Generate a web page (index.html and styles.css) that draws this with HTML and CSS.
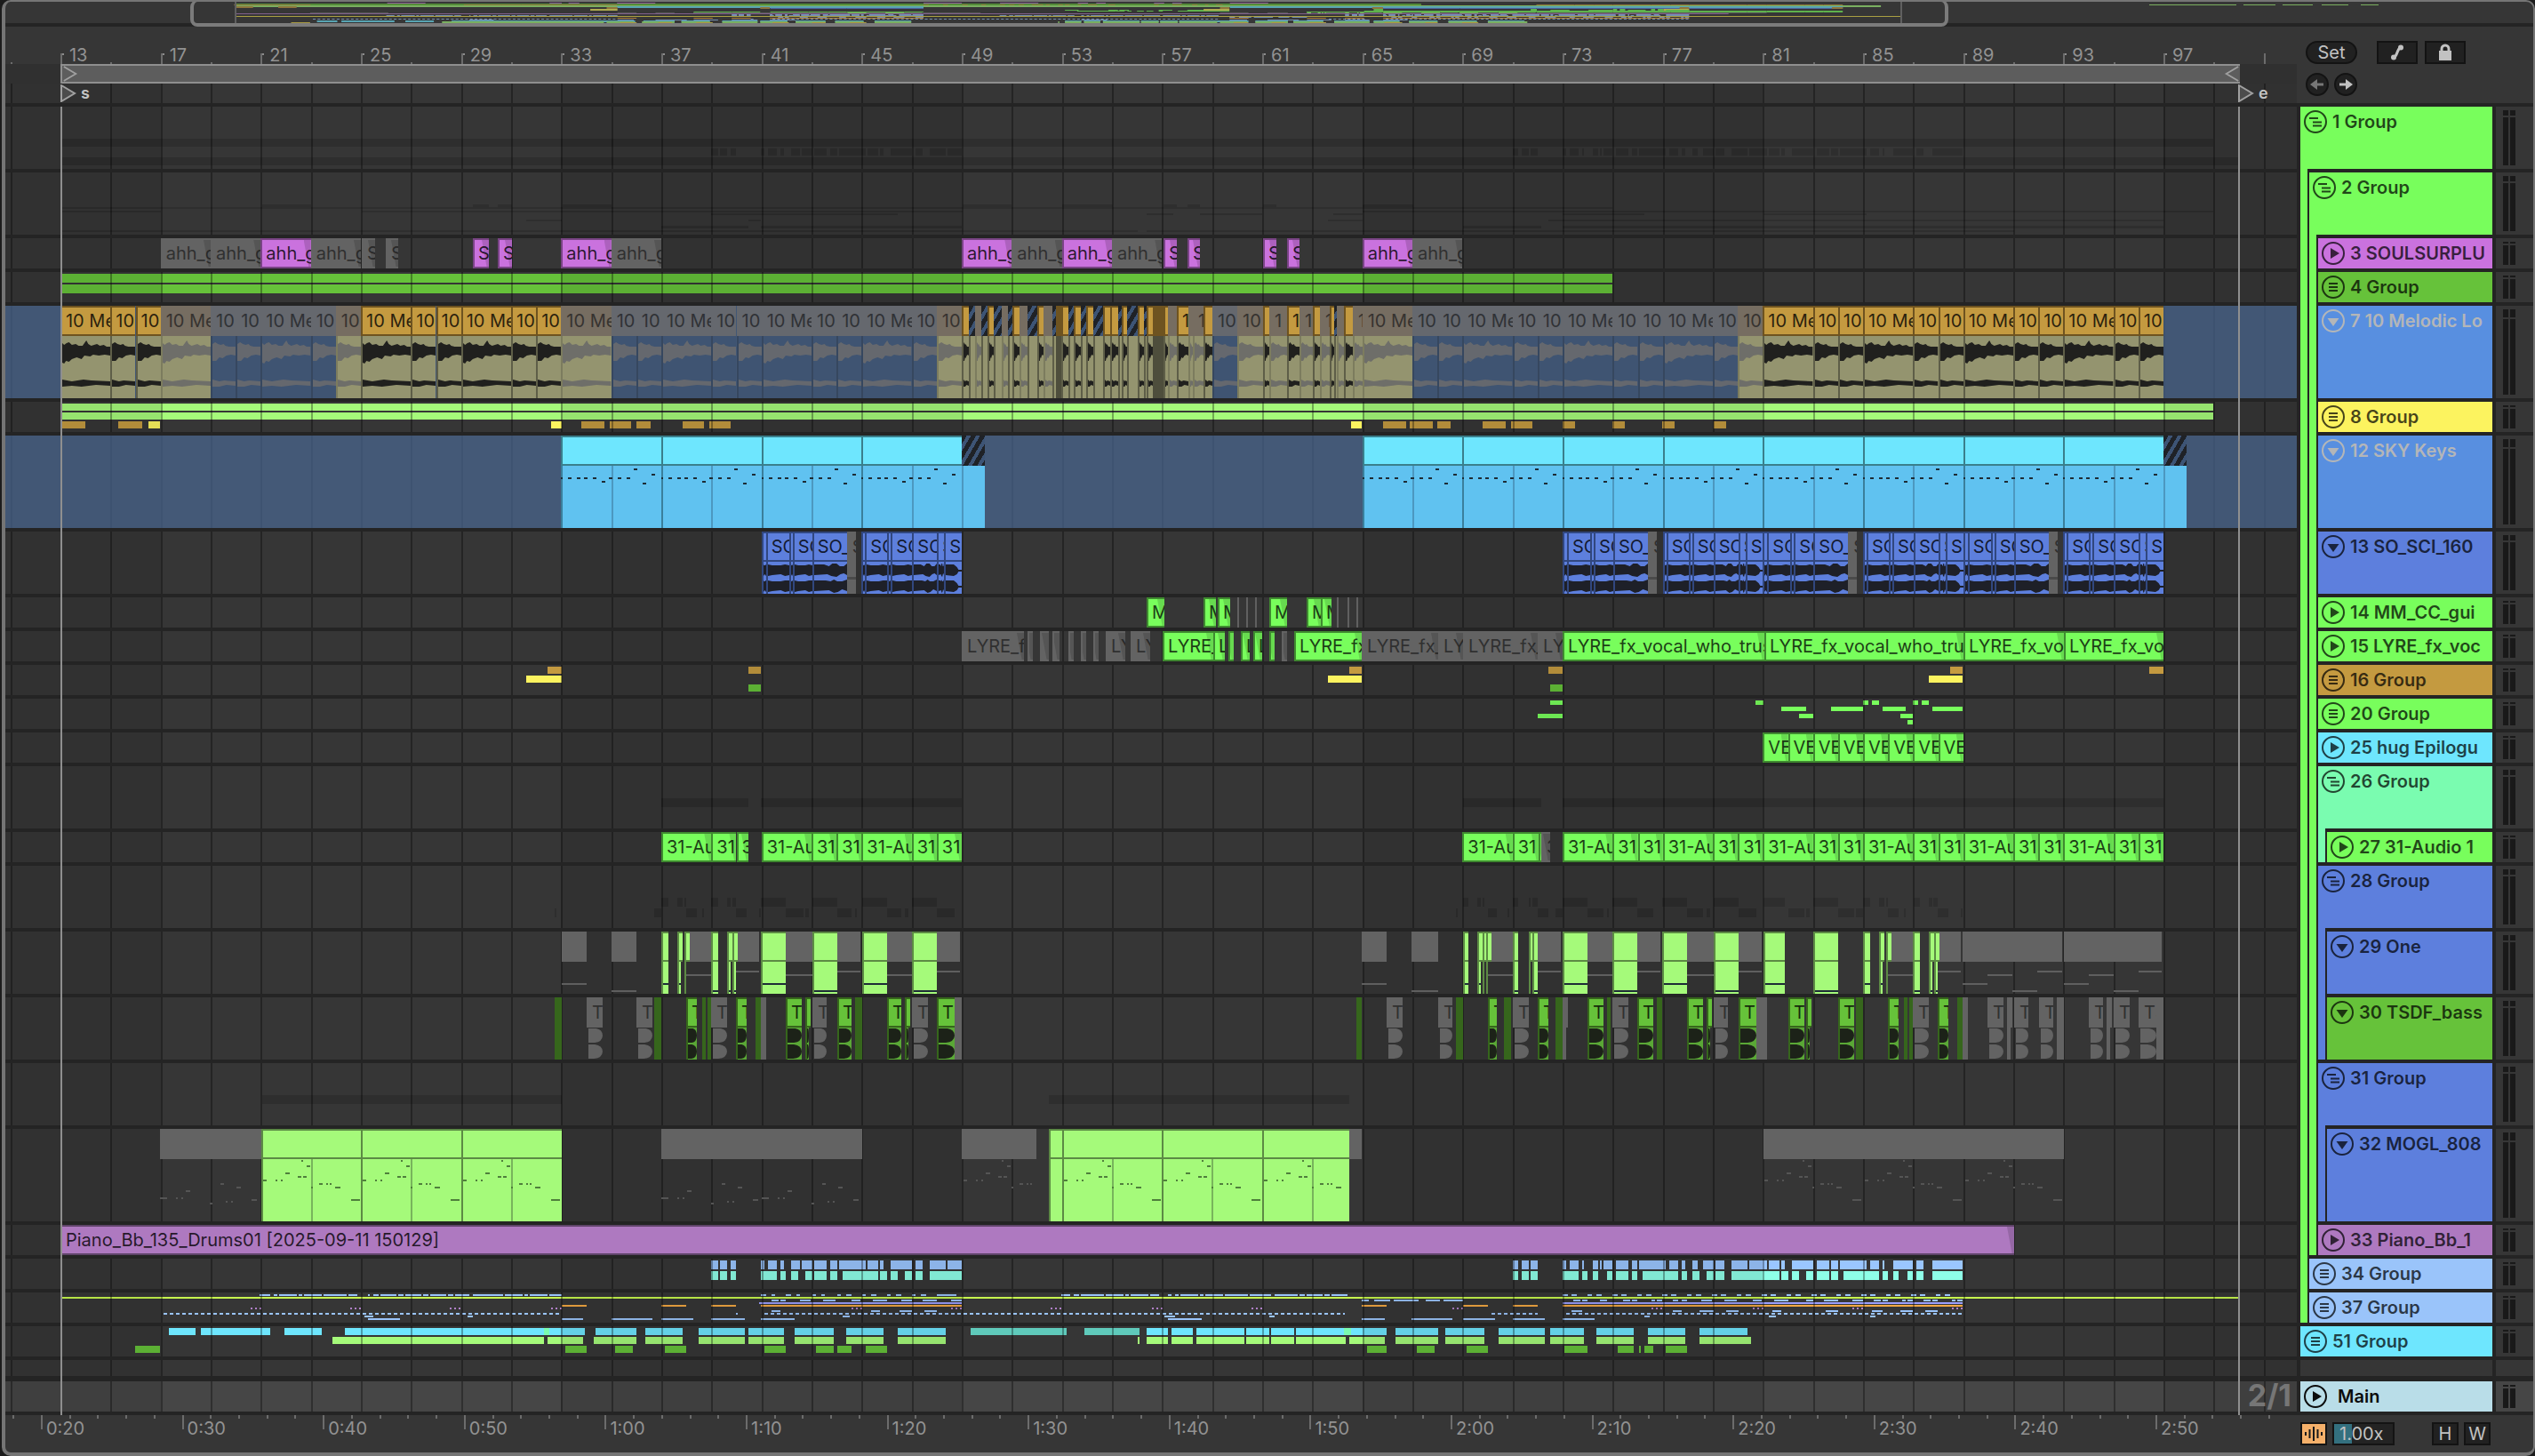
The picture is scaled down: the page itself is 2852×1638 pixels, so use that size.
FILE: index.html
```html
<!DOCTYPE html>
<html lang="en">
<head>
<meta charset="utf-8">
<meta name="viewport" content="width=device-width, initial-scale=1">
<title>Arrangement</title>
<link rel="stylesheet" href="styles.css">
</head>
<body>
<div class="window">
  <div class="overview" id="overview"></div>

  <div class="panel top">
    <div class="rulers">
      <div class="bar-ruler" id="bar-ruler"></div>
      <div class="loop-row">
        <div class="loop" id="loop">
          <svg class="flag" viewBox="0 0 18 20"><path d="M1 1 L16 10 L1 19"/></svg>
          <svg class="flag" viewBox="0 0 18 20"><path d="M17 1 L2 10 L17 19"/></svg>
        </div>
      </div>
      <div class="locators" id="locators"></div>
    </div>
    <div class="set-controls">
      <div class="control-row">
        <button class="pill">Set</button>
        <button class="square" aria-label="Automation mode"><svg viewBox="0 0 24 22"><path class="line" d="M8 17 C13 14 11 8 16 5"/><circle cx="8" cy="16.500" r="3"/><circle cx="16" cy="5.500" r="3"/></svg></button>
        <button class="square lock" aria-label="Lock envelopes"><svg viewBox="0 0 24 22"><path class="line" d="M8 10 V7 a4 4 0 0 1 8 0 V10"/><rect x="5" y="9" width="14" height="11"/></svg></button>
      </div>
      <div class="control-row arrows">
        <button class="round off" aria-label="Previous locator"><svg viewBox="0 0 20 20"><path class="line" d="M17 10 H6"/><path d="M2 10 L10 4 V16 Z"/></svg></button>
        <button class="round" aria-label="Next locator"><svg viewBox="0 0 20 20"><path class="line" d="M3 10 H14"/><path d="M18 10 L10 4 V16 Z"/></svg></button>
      </div>
    </div>
  </div>

  <div class="panel tracks">
    <div class="lanes" id="lanes"></div>
    <div class="headers" id="headers"></div>
    <div class="mixers" id="mixers"></div>
  </div>

  <div class="panel bottom">
    <div class="time-ruler" id="time-ruler"></div>
    <div class="foot-controls">
      <button class="wave-button" aria-label="Show waveforms"><svg viewBox="0 0 26 22"><path d="M4 9v4M8.500 6v10M13 3v16M17.500 6v10M22 9v4"/></svg></button>
      <input class="zoom" type="text" aria-label="Vertical waveform zoom" value="1.00x">
      <button class="square small">H</button>
      <button class="square small">W</button>
    </div>
  </div>
</div>
<script src="arrangement.js"></script>
</body>
</html>
```
FILE: styles.css
```css
:root {
  --line: #242424;
  --surface: #363636;
  --green: #78fe5c;
  --lime: #a5fa7a;
  --leaf: #66c23a;
  --violet: #ca72de;
  --amber: #c49a40;
  --yellow: #fcf35f;
  --cyan: #6ee6fe;
  --blue: #5d7fdd;
  --orchid: #ae79c0;
  --sky: #9ac4fa;
}
* { box-sizing: border-box; }
body {
  margin: 0;
  background: #1c1c1c;
  color: #929292;
  font: 400 20px/34px Inter, "Noto Sans", sans-serif;
  overflow: hidden;
}
button, input { font: inherit; color: inherit; padding: 0; margin: 0; }
.window {
  margin-left: 2px;
  border: solid #757575;
  border-width: 2px 2px 4px 4px;
  border-radius: 10px;
  background: var(--surface);
  overflow: hidden;
}
.panel {
  display: grid;
  grid-template-columns: minmax(0, 1fr) 216px 42px;
  column-gap: 4px;
}

/* song overview */
.overview {
  position: relative;
  height: 28px;
  border-bottom: 4px solid var(--line);
}
.overview svg { display: block; width: 100%; height: 24px; opacity: .62; }
.overview-view {
  position: absolute;
  top: -2px;
  height: 30px;
  border: 4px solid #7b7b7b;
  border-top-width: 2px;
  border-radius: 8px;
}
.overview-edge { position: absolute; top: 0; width: 2px; height: 24px; background: #606060; }

/* rulers */
.top { border-bottom: 4px solid var(--line); height: 90px; }
.rulers { position: relative; }
.bar-ruler { position: relative; height: 42px; line-height: 20px; overflow: hidden; }
.bar-tick { position: absolute; bottom: 0; height: 12px; border-left: 2px solid #6c6c6c; }
.bar-tick.minor { height: 2px; }
.bar-tick span { position: absolute; left: 8px; bottom: 0; }
.bar-tick.labelled::before { content: ""; position: absolute; top: 0; left: 0; width: 2px; height: 2px; background: #8c8c8c; }
.loop-row { position: relative; height: 22px; background: #303030; }
.loop {
  position: absolute;
  height: 22px;
  background: #5d5d5d;
  border: 2px solid #8f8f8f;
  border-right-width: 0;
  display: flex;
  justify-content: space-between;
}
.flag { width: 18px; height: 18px; fill: none; stroke: #a0a0a0; stroke-width: 2; }
.locators { position: relative; height: 22px; }
.locator { position: absolute; z-index: 4; display: flex; gap: 5px; color: #c4c4c4; font-size: 18px; font-weight: 600; line-height: 22px; }
.locator svg { width: 18px; height: 20px; margin-top: 1px; fill: #4c4c4c; stroke: #a0a0a0; stroke-width: 2; }
.time-ruler { position: relative; height: 42px; line-height: 24px; overflow: hidden; }
.time-tick { position: absolute; top: 0; height: 4px; border-left: 2px solid #6c6c6c; }
.time-tick.major { height: 16px; }
.time-tick span { position: absolute; left: 4px; top: 3px; }

/* lanes */
.tracks { background: var(--line); }
.lanes { position: relative; overflow: hidden; }
.lane { position: relative; height: 34px; margin-bottom: 4px; background: var(--surface); }
.lane::after { content: ""; position: absolute; z-index: 3; left: 0; right: 0; top: 100%; height: 4px; background: var(--line); }
.h70 { height: 70px; }
.h104 { height: 104px; }
.h18 { height: 18px; margin-bottom: 6px; }
.lane.h18::after { height: 6px; }
.lane.main { background: #464646; }
.grid { position: absolute; z-index: 1; inset: 0; overflow: hidden; }
.grid i { position: absolute; top: 0; bottom: 0; width: 2px; background: rgba(0, 0, 0, .32); }
.grid b { position: absolute; top: 0; bottom: 0; background: rgba(0, 0, 0, .09); }
.tint { position: absolute; z-index: 1; inset: 0; background: rgba(74, 104, 147, .7); }
.edge { position: absolute; z-index: 5; top: 0; bottom: 0; width: 2px; background: #8f8f8f; }
.position { position: absolute; z-index: 3; right: 6px; top: -2px; font-size: 34px; font-weight: 700; line-height: 36px; color: #767676; }
.mini { position: absolute; }
.note { position: absolute; z-index: 3; height: 2px; background: #1d2c36; }
.note.dim { background: #5f5f5f; }
.note.soft { background: #555; }
.note.leafy { background: #4f7f3c; }
.shade { position: absolute; background: rgba(0, 0, 0, .14); }
.dots { background: repeating-linear-gradient(90deg, var(--sky) 0 4px, transparent 4px 7px); }

.clip {
  position: absolute;
  z-index: 2;
  top: 0;
  height: 34px;
  padding-left: 4px;
  border: 2px solid rgba(0, 0, 0, .4);
  border-right: 0;
  background-clip: border-box;
  color: rgba(0, 0, 0, .8);
  line-height: 30px;
  white-space: nowrap;
  overflow: hidden;
}
.clip.fade::after {
  content: "";
  position: absolute;
  top: 0;
  right: 0;
  width: 8px;
  height: 100%;
  background: rgba(0, 0, 0, .14);
  clip-path: polygon(0 0, 100% 0, 100% 100%, 70% 100%);
}
.clip.off { background: #636363; border-color: transparent; color: #303030; }
.clip.violet { background: var(--violet); }
.clip.green { background: var(--green); border-color: #3f8a30; color: #1d4016; }
.clip.lime { background: var(--lime); border-color: #5c8a44; }
.clip.leaf { background: var(--leaf); border-color: #36661c; }
.clip.cyan { background: var(--cyan); border-color: #3a7f8c; }
.clip.blue { background: var(--blue); border-color: #31477f; }
.clip.amber { background: var(--amber); border-color: #6e5320; }
.clip.orchid { background: var(--orchid); border-color: #5f4469; }
.clip.taupe { background: #766d61; border-color: transparent; color: #363330; }
.clip.slate { background: #65686e; border-color: transparent; color: #303236; }
.clip.brown { background: #6e5320; border-color: #6e5320; }
.clip.hatch { background: repeating-linear-gradient(120deg, #1f2227 0 5px, #3d5475 5px 9px); border: 0; }
.clip.solid { background: #36661c; border: 0; height: 100%; }
.body { position: absolute; z-index: 2; top: 34px; bottom: 0; overflow: hidden; border-left: 2px solid transparent; }
.body svg { display: block; width: 100%; height: 100%; }
.body.khaki { background: #94946f; border-color: #5e5e48; fill: #20201e; }
.body.khaki.mute { border-color: #7c7c5e; fill: #6e6e69; }
.body.navy { background: #3f5472; border-color: #36475f; fill: #65686e; }
.body.dark { background: #4e4e3c; }
.body.blue { background: var(--blue); border-color: #31477f; fill: #1e2028; }
.body.leaf { background: #5aa836; border-color: #36661c; fill: #1c2218; }
.body.grey { fill: #636363; }
.body.greyblock { background: #636363; fill: #4a4a4a; border: 0; }
.body.aqua { background: #60c2f0; border-color: #3a7f9c; }
.body.lime { background: var(--lime); border-color: #5c8a44; }
.body.weak { border-color: #78b45c; }
.body.aqua.weak { border-color: #4c98c0; }

/* track headers */
.header { display: flex; height: 34px; margin-bottom: 4px; }
.header.h70 { height: 70px; }
.header.h104 { height: 104px; }
.header.h18 { height: 18px; margin-bottom: 6px; }
.strip { flex: none; width: 8px; margin: -4px 2px 0 0; }
.title {
  flex: 1;
  min-width: 0;
  display: flex;
  align-items: flex-start;
  gap: 6px;
  padding-left: 4px;
  font-weight: 600;
  color: rgba(0, 0, 0, .72);
  white-space: nowrap;
  overflow: hidden;
}
.title.picked { color: #b4b6b8; }
.title.main { gap: 12px; color: #0c0c0c; }
.fold { flex: none; width: 26px; height: 26px; margin-top: 4px; border: 0; background: none; color: inherit; }
.fold svg { display: block; fill: none; stroke: currentColor; stroke-width: 2; }
.fold svg .fill { fill: currentColor; stroke: none; }
.name { overflow: hidden; }
.mixer { height: 34px; margin-bottom: 4px; padding: 4px 8px; display: flex; gap: 2px; background: var(--surface); }
.mixer.h70 { height: 70px; }
.mixer.h104 { height: 104px; }
.mixer.h18 { height: 18px; margin-bottom: 6px; }
.mixer.main { background: #464646; }
.meter { width: 6px; display: flex; flex-direction: column; gap: 2px; }
.meter::before { content: ""; flex: 1; background: #191919; }
.meter::after { content: ""; flex: 9; background: #191919; }
.spare { background: var(--surface); flex: 1; }

/* buttons */
.set-controls { grid-column: 2 / 4; padding: 16px 0 0 6px; }
.control-row { display: flex; }
.control-row.arrows { gap: 6px; margin-top: 10px; }
.pill, .square, .round { height: 26px; border: 2px solid #131313; background: #212121; color: #c2c2c2; line-height: 22px; }
.pill { width: 58px; border-radius: 13px; margin-right: 22px; }
.square { width: 46px; }
.square.lock { margin-left: 8px; }
.square svg { display: block; width: 24px; height: 22px; margin: auto; }
.round { width: 26px; border-radius: 13px; }
.round.off { color: #777; }
.round svg { display: block; width: 20px; height: 20px; margin: auto; }
.pill svg, .square svg, .round svg { fill: currentColor; }
button .line { fill: none; stroke: currentColor; stroke-width: 3; }
.foot-controls { grid-column: 2 / 4; display: flex; align-items: flex-start; padding-top: 8px; }
.wave-button { width: 30px; height: 26px; border: 2px solid #141414; background: #f5b06a; }
.wave-button svg { display: block; width: 26px; height: 22px; stroke: #1a1a1a; stroke-width: 2; fill: none; }
.zoom {
  width: 70px;
  height: 26px;
  margin: 0 42px 0 6px;
  padding-left: 6px;
  border: 2px solid #141414;
  background: linear-gradient(90deg, #33707f 20px, #232323 20px);
  color: #c2c2c2;
}
.square.small { width: 30px; margin-right: 6px; }
```
FILE: arrangement.js
```js
// The visible stretch of the song. Positions are in timeline units:
// bar 13 starts at 68 and a bar is 28.167 units long.
const VIEW_START = 6;
const VIEW_SPAN = 2578;
const BAR = 28.167;
const bar = n => 68 + (n - 13) * BAR;
const pct = x => (x - VIEW_START) / VIEW_SPAN * 100;

const el = (tag, cls, parent, text) => {
  const e = document.createElement(tag);
  if (cls) e.className = cls;
  if (text) e.textContent = text;
  parent.append(e);
  return e;
};
const span = (e, a, b) => {
  e.style.left = pct(a) + '%';
  e.style.width = (b - a) / VIEW_SPAN * 100 + '%';
  return e;
};
const runs = s => s.trim().split(/\s+/).map(r => r.split('-').map(Number));
const each = (s, f) => runs(s).forEach(([a, b], i) => f(a, b, i));

const overviewRects = [];
let overviewY = 0;
const trace = (a, b, color, y = overviewY, h = 1) => overviewRects.push([a, b, color, y, h]);

const grid = parent => {
  const g = el('div', 'grid', parent);
  [[10, 17], [33, 49], [65, 81], [97, 104]].forEach(([a, b]) => span(el('b', '', g), bar(a), bar(b)));
  for (let n = 11; n <= 101; n += 2) el('i', '', g).style.left = pct(bar(n)) + '%';
};

const mini = (lane, y, h, color, list, oy) => each(list, (a, b) => {
  const m = span(el('div', 'mini', lane), a, b);
  m.style.top = y + 'px';
  m.style.height = h + 'px';
  m.style.background = color;
  if (oy !== undefined) trace(a, b, color, oy, h > 4 ? 2 : 1);
});
const shade = (lane, y, h, list) => each(list, (a, b) => {
  const m = span(el('div', 'shade', lane), a, b);
  m.style.top = y + 'px';
  m.style.height = h + 'px';
});
const note = (lane, y, a, b, cls = '') => {
  span(el('div', 'note ' + cls, lane), a, b).style.top = y + 'px';
};
const clip = (lane, a, b, cls, text = '') => span(el('div', 'clip ' + cls, lane, text), a, b);
const body = (lane, a, b, cls, path, box) => {
  const e = span(el('div', 'body ' + cls, lane), a, b);
  if (path) e.innerHTML = `<svg viewBox="${box}" preserveAspectRatio="none"><path d="${path}"/></svg>`;
  return e;
};

const LOOP_LONG = 'M0 8L4 10L9 8L14 7L20 10L28 9L34 11L42 11L46 8L50 5L54 9L60 11L66 10L72 9L78 11L86 10L92 12L100 12V22L88 21L76 22L64 21L58 23L46 22L40 26L30 24L20 26L14 29L8 28L4 31L0 30ZM0 49L20 51L44 49L60 50L100 51V56L70 55L40 57L20 56L0 57Z';
const LOOP_SHORT = 'M0 9L12 7L24 9L36 10L48 9L56 11L70 12L100 12V22L80 21L60 22L44 25L30 24L16 28L0 28ZM0 49L30 51L50 50L100 51V56L60 55L30 57L0 57Z';
const SCI = 'M0 3L20 4L60 4L80 3L100 4V15L80 16L60 14L20 15L0 16ZM0 21L20 22L60 22L80 21L100 21V33L80 34L60 32L20 33L0 34Z';
const SCI_SWELL = 'M0 3L30 3L45 5L55 2L68 2L78 5L90 5L100 2V15L90 13L80 14L68 17L52 16L40 14L0 15ZM0 21L35 21L50 22L60 20L70 22L85 22L100 20V33L85 31L72 34L60 35L45 32L0 33Z';
const SCI_TAIL = 'M0 3L50 3L70 6L80 9L100 9V11L80 11L70 14L50 16L0 15ZM0 21L50 21L70 24L80 27L100 27V29L80 29L70 32L50 34L0 33Z';
const BASS = 'M0 1H55Q98 2 100 9Q98 16 45 17H0ZM0 19H45Q98 20 100 27Q98 34 40 35H0Z';
const BLOCKS = '800-808 810-818 822-828 856-860 864-874 878-882 890-900 902-914 916-930 934-942 944-974 976-988 990-994 1002-1026 1030-1038 1046-1064 1066-1082 1702-1708 1712-1720 1722-1730 1758-1762 1766-1776 1780-1782 1792-1798 1800-1802 1804-1814 1818-1832 1836-1842 1844-1874 1878-1888 1892-1896 1904-1910 1916-1928 1930-1940 1948-1966 1968-1988 1990-2002 2004-2008 2016-2040 2044-2058 2060-2068 2070-2100 2104-2114 2118-2120 2130-2152 2156-2164 2174-2208';

/* lane contents, one function for each track */
const content = {
  1(l) {
    shade(l, 36, 9, '69-2490');
    shade(l, 57, 9, '69-2519');
    shade(l, 47, 8, BLOCKS);
  },
  2(l) {
    shade(l, 39, 2, '69-1814');
    shade(l, 43, 2, '69-181 407-633 633-1083 1533-2490');
    shade(l, 36, 3, '295-350 532-550 560-576 633-688 1083-1138 1195-1252 1309-1324 1336-1350 1421-1436 1533-1590');
    shade(l, 46, 2, '800-1010 1290-1320 1350-1420 1500-1533 1758-1850 1984-2100');
    shade(l, 53, 2, '592-632 842-856 1494-1533 1742-1758 1758-2434');
    shade(l, 60, 3, '744-842 856-1082 1646-1734 1758-2434');
    shade(l, 65, 2, '69-1280 1290-2266');
  },
  3(l) {
    overviewY = 0;
    const put = (s, cls) => each(s, (a, b) => {
      clip(l, a, b, cls + ' fade', b - a > 40 ? 'ahh_g' : 'S');
      if (cls === 'violet') trace(a, b, '#ca72de');
    });
    const two = (...n) => n.map(b => `${bar(b)}-${bar(b + 2)}`).join(' ');
    put(two(17, 19, 23, 35, 51, 55, 67) + ' 407-422 434-448', 'off');
    put(two(21, 33, 49, 53, 65) + ' 532-550 560-576 1309-1324 1336-1350 1421-1436 1448-1462', 'violet');
  },
  4(l) {
    mini(l, 2, 10, 'var(--leaf)', '69-1814', 1);
    mini(l, 14, 10, 'var(--leaf)', '69-1814');
  },
  7(l) {
    const LOOK = {
      A: ['amber', 'khaki'], G: ['taupe', 'khaki mute'], N: ['slate', 'navy'],
      H: ['hatch', 'khaki'], B: ['brown', 'dark']
    };
    const put = (a, b, kind) => {
      const [c, w] = LOOK[kind];
      const width = b - a;
      const plain = kind === 'H' || kind === 'B';
      const text = plain ? '' : width > 40 ? '10 Me' : width > 22 ? '10' : width > 10 ? '1' : '';
      clip(l, a, b, c, text);
      body(l, a, b, w, plain ? '' : width > 40 ? LOOP_LONG : LOOP_SHORT, '0 0 100 70');
      if (kind === 'A') trace(a, b, '#c49a40', 2);
    };
    const pattern = (start, list, kinds) => {
      let n = start;
      list.forEach((len, i) => { put(bar(n), bar(n + len), kinds[i] || kinds[kinds.length - 1]); n += len; });
    };
    pattern(13, [2, 1, 1], 'A');
    pattern(17, [2, 1, 1, 2, 1, 1], 'GNNNNG');
    pattern(25, [2, 1, 1, 2, 1, 1], 'A');
    pattern(33, [2, 1, 1, 2, 1, 1, 2, 1, 1, 2, 1, 1], 'GNNNNNNNNNNG');
    ('1082-1090A 1090-1097H 1097-1104G 1104-1111H 1111-1118A 1118-1127H 1127-1134G 1134-1139H 1139-1147A ' +
     '1147-1156G 1156-1167H 1167-1174A 1174-1184G 1184-1188H 1188-1194B 1194-1202A 1202-1208H 1208-1216A ' +
     '1216-1222H 1222-1230A 1230-1241H 1241-1249A 1249-1258A 1258-1262H 1262-1268A 1268-1280H 1280-1287A ' +
     '1287-1290H 1290-1297A 1297-1309B 1309-1314A 1314-1324G 1324-1337A 1337-1342G 1342-1354G 1354-1364A ' +
     '1364-1392N 1392-1421G 1421-1428A 1428-1448G 1448-1462A 1462-1477G 1477-1485A 1485-1496G 1496-1501A ' +
     '1501-1504H 1504-1512G 1512-1522A 1522-1533G').split(' ').forEach(s => {
      const [a, b] = s.slice(0, -1).split('-').map(Number);
      put(a, b, s.slice(-1));
    });
    pattern(65, [2, 1, 1, 2, 1, 1, 2, 1, 1, 2, 1, 1], 'GNNNNNNNNNNG');
    pattern(81, [2, 1, 1, 2, 1, 1, 2, 1, 1, 2, 1, 1], 'A');
  },
  8(l) {
    mini(l, 2, 8, 'var(--lime)', '69-2490', 3);
    mini(l, 12, 8, 'var(--lime)', '69-2490');
    mini(l, 22, 8, 'var(--amber)', '69-96 133-160 654-680 686-710 716-732 768-792 798-822 1556-1582 1586-1612 1617-1632 1668-1694 1700-1724 1758-1772 1814-1828 1870-1884 1928-1942', 4);
    mini(l, 22, 8, 'var(--yellow)', '167-180 620-632 1520-1532');
  },
  12(l) {
    const NOTES = '0-2-47 8-12-47 18-22-47 26-30-47 36-40-47 46-50-51 54-58-47 64-68-47 74-78-47 82-86-37 92-96-53 102-106-43';
    [[33, 49], [65, 97]].forEach(([from, to]) => {
      trace(bar(from), bar(to), '#6ee6fe', 4, 2);
      for (let n = from; n < to; n += 4) {
        clip(l, bar(n), bar(n + 4), 'cyan');
        body(l, bar(n), bar(n + 2), 'aqua');
        body(l, bar(n + 2), bar(n + 4), 'aqua weak');
        NOTES.split(' ').forEach(s => {
          const [a, b, y] = s.split('-').map(Number);
          note(l, y, bar(n) + a, bar(n) + b);
        });
      }
      clip(l, bar(to), bar(to) + 26, 'hatch');
      body(l, bar(to), bar(to) + 26, 'aqua weak');
    });
  },
  13(l) {
    const A = [[0, 5, ''], [5, 31, 'SO'], [31, 35, ''], [35, 57, 'SO'], [57, 96, 'SO_']];
    const B = [[0, 4, ''], [4, 29, 'SO'], [29, 33, ''], [33, 57, 'SO'], [57, 85, 'SO'], [85, 93, 'S'], [93, 113, 'SO']];
    [[41, A], [45, B], [73, A], [77, B], [81, A], [85, B], [89, A], [93, B]].forEach(([n, set]) => {
      set.forEach(([a, b, t]) => {
        clip(l, bar(n) + a, bar(n) + b, 'blue', t);
        body(l, bar(n) + a, bar(n) + b, 'blue', a >= 93 ? SCI_TAIL : a >= 57 ? SCI_SWELL : SCI, '0 0 100 36');
      });
      if (set === A) {
        clip(l, bar(n) + 96, bar(n) + 106, 'off', 'S');
        body(l, bar(n) + 96, bar(n) + 106, 'greyblock', 'M0 17H100V20H0Z', '0 0 100 36');
      }
      trace(bar(n), bar(n + 4), '#5d7fdd', 6);
    });
  },
  14(l) {
    each('1290-1310 1354-1368 1370-1384 1428-1448 1470-1486 1486-1498', (a, b) => {
      clip(l, a, b, 'green fade', 'M');
      trace(a, b, '#78fe5c', 8);
    });
    mini(l, 0, 34, '#606060', '1392-1394 1402-1404 1412-1414 1504-1506 1516-1518 1526-1528');
  },
  15(l) {
    const name = 'LYRE_fx_vocal_who_trust';
    each('1082-1152 1156-1162 1170-1180 1184-1192 1202-1208 1216-1222 1230-1236 1244-1266 1272-1294 1442-1448 1532-1618 1618-1646 1646-1730 1730-1758',
      (a, b) => clip(l, a, b, 'off fade', b - a > 12 ? name : ''));
    each('1308-1365 1365-1378 1382-1388 1396-1406 1410-1420 1428-1434 1456-1532 1758-1985 1985-2209 2209-2322 2322-2434',
      (a, b) => { clip(l, a, b, 'green fade', b - a > 8 ? name : ''); trace(a, b, '#78fe5c', 9); });
  },
  16(l) {
    mini(l, 2, 8, 'var(--amber)', '616-632 842-856 1518-1532 1742-1758 2194-2208 2418-2434', 5);
    mini(l, 12, 8, 'var(--yellow)', '592-632 1494-1532 2170-2208', 7);
    mini(l, 22, 8, 'var(--leaf)', '842-856 1744-1758');
  },
  20(l) {
    mini(l, 2, 5, 'var(--green)', '1744-1758 1975-1984 2096-2102 2106-2114 2152-2158 2162-2170', 7);
    mini(l, 9, 5, 'var(--green)', '2004-2032 2060-2096 2118-2144 2174-2208', 8);
    mini(l, 17, 5, 'var(--green)', '1730-1758 2024-2040 2138-2152', 9);
    mini(l, 24, 5, 'var(--green)', '2146-2152');
  },
  25(l) {
    for (let n = 81; n < 89; n++) clip(l, bar(n), bar(n + 1), 'green fade', 'VE');
  },
  26(l) { shade(l, 36, 10, '744-842 856-1082 1646-1734 1758-2434'); },
  27(l) {
    const put = (a, b) => {
      clip(l, a, b, 'green fade', b - a > 40 ? '31-Au' : b - a > 20 ? '31' : b - a > 10 ? '3' : '');
      trace(a, b, '#78fe5c', 10);
    };
    const four = n => { put(bar(n), bar(n + 2)); put(bar(n + 2), bar(n + 3)); put(bar(n + 3), bar(n + 4)); };
    put(bar(37), bar(39)); put(bar(39), bar(40)); put(bar(40), 842);
    put(bar(69), bar(71)); put(bar(71), 1731); put(1731, 1734);
    clip(l, 1734, 1744, 'off fade', '3');
    [41, 45, 73, 77, 81, 85, 89, 93].forEach(four);
  },
  28(l) {
    shade(l, 36, 10, '744-752 762-768 770-772 800-808 818-822 824-828 856-884 914-942 970-998 1026-1054 1646-1652 1662-1666 1668-1670 1702-1708 1720-1722 1724-1730 1758-1786 1814-1842 1870-1898 1928-1956 1984-2008 2040-2068 2096-2104 2114-2120 2122-2124 2153-2160 2170-2174 2175-2180');
    shade(l, 48, 10, '624-626 736-744 772-784 790-792 828-840 854-856 884-904 906-910 942-958 962-964 998-1014 1018-1022 1054-1074 1638-1640 1674-1684 1696-1698 1730-1742 1750-1758 1786-1804 1808-1810 1842-1860 1898-1916 1920-1924 1956-1976 2012-2030 2032-2036 2068-2086 2088-2096 2124-2136 2142-2144 2180-2192 2206-2208');
  },
  29(l) {
    const put = (s, y, on) => each(s, (a, b) => {
      clip(l, a, b, on ? 'lime' : 'off');
      if (on) body(l, a, b, 'lime');
      if (b - a > 3) note(l, y, on ? a + 2 : a, b, on ? '' : 'dim');
      trace(a, b, on ? '#a5fa7a' : '#707070', 11);
    });
    put('632-660 1532-1560', 58);
    put('688-716 1588-1618', 66);
    put('772-800 884-914 998-1026 1674-1702 1786-1814 1898-1928 2124-2152', 48);
    put('828-854 942-968 1054-1080 1730-1756 1842-1868 1956-1982 2180-2206', 44);
    put('744-752 762-766 856-884 970-998 1646-1652 1662-1666 1758-1786 1870-1898 1984-2008 2096-2104 2114-2118', 58, true);
    put('770-772 800-808 818-822 824-828 914-942 1026-1054 1668-1670 1672-1674 1702-1708 1720-1722 1724-1730 1814-1842 1928-1956 2040-2068 2122-2124 2152-2160 2170-2174 2176-2180', 66, true);
    [[2208, 2320], [2322, 2432]].forEach(([a, b]) => {
      clip(l, a, b, 'off');
      note(l, 58, a, a + 28, 'dim');
      note(l, 48, a + 28, a + 56, 'dim');
      note(l, 66, a + 56, a + 84, 'dim');
      note(l, 44, a + 84, b, 'dim');
    });
  },
  30(l) {
    const label = (a, b) => b - a > 19 ? 'TS' : b - a > 9 ? 'T' : '';
    each('624-632 736-744 790-792 796-798 850-856 962-970 1526-1532 1638-1646 1692-1694 1696-1698 1750-1758 1808-1810 1864-1870 2088-2096 2142-2144 2148-2150 2202-2208', (a, b) => clip(l, a, b, 'solid'));
    each('660-678 716-734 800-818 914-930 1026-1044 1560-1578 1618-1634 1702-1720 1814-1832 1928-1944 2152-2170 2236-2254 2266-2282 2294-2310 2350-2366 2378-2396 2406-2426', (a, b) => {
      clip(l, a, b, 'off', label(a, b));
      body(l, a, b, 'grey', BASS, '0 0 100 36');
    });
    each('856-862 1074-1082 1758-1762 1976-1988 2208-2214 2258-2262 2314-2322 2370-2374 2426-2434', (a, b) => {
      clip(l, a, b, 'off');
      body(l, a, b, 'greyblock');
    });
    each('772-784 828-840 884-902 906-910 942-958 998-1014 1018-1022 1054-1074 1674-1684 1730-1742 1786-1804 1842-1860 1898-1916 1920-1924 1956-1976 2012-2030 2032-2036 2068-2086 2124-2136 2180-2192', (a, b) => {
      clip(l, a, b, 'leaf', label(a, b));
      body(l, a, b, 'leaf', BASS, '0 0 100 36');
      trace(a, b, '#66c23a', 12);
    });
  },
  31(l) { shade(l, 36, 10, '295-632 1180-1518'); },
  32(l) {
    const HOOK = '2-6-57 16-18-57 22-24-57 27-32-49 41-45-53 47-51-53 45-47-35 51-55-41 56-58-65 65-69-61 73-75-61 77-79-61 83-89-65 101-111-79';
    const BASE = '0-8-77 18-20-77 24-26-77 29-34-69 68-72-61 86-91-65 56-59-83 74-76-81 80-82-81 103-109-79';
    const notes = (x, set, cls, end = 9999) => set.split(' ').forEach(s => {
      const [a, b, y] = s.split('-').map(Number);
      if (x + b <= end) note(l, y, x + a, x + b, cls);
    });
    each('180-295 744-970 1082-1166 1518-1532 1984-2322', (a, b) => { clip(l, a, b, 'off'); trace(a, b, '#707070', 11); });
    notes(180, BASE, 'soft');
    notes(744, BASE, 'soft');
    notes(857, BASE, 'soft');
    notes(1082, HOOK, 'soft', 1166);
    [81, 85, 89].forEach(n => notes(bar(n), HOOK, 'soft'));
    [[294, 406], [406, 519], [519, 632], [1180, 1195], [1195, 1307], [1307, 1420], [1420, 1518]].forEach(([a, b]) => {
      clip(l, a, b, 'lime');
      const mid = Math.min(a + 56, b);
      body(l, a, mid, 'lime');
      if (mid < b) {
        body(l, mid, b, 'lime weak');
        notes(a, HOOK, 'leafy', b);
      }
    });
  },
  33(l) {
    clip(l, 68, 2266, 'orchid fade', 'Piano_Bb_135_Drums01 [2025-09-11 150129]');
    trace(69, 2266, '#ae79c0', 12);
  },
  34(l) {
    mini(l, 2, 10, '#9ac6ff', BLOCKS, 13);
    mini(l, 14, 10, '#8effe8', '800-808 810-818 822-828 856-874 878-884 890-898 906-914 916-930 934-942 948-988 990-998 1002-1010 1018-1026 1030-1038 1046-1082 1702-1708 1712-1720 1722-1730 1758-1776 1780-1786 1792-1798 1808-1814 1818-1832 1836-1842 1848-1888 1892-1898 1904-1912 1920-1928 1930-1940 1948-2002 2004-2012 2016-2024 2032-2040 2044-2058 2060-2068 2074-2114 2118-2124 2130-2136 2146-2152 2156-2164 2174-2208');
  },
  37(l) {
    const sky = '#9ac4fa';
    const ticks = Array.from({ length: 8 }, (_, i) => 1758 + i * 56)
      .map(x => `${x}-${x + 6} ${x + 10}-${x + 16} ${x + 28}-${x + 33} ${x + 38}-${x + 44}`).join(' ');
    mini(l, 2, 2, sky, '292-304 308-312 314-334 336-340 342-362 364-390 392-402 414-416 420-426 428-446 448-454 456-474 476-482 484-502 504-510 512-528 532-566 568-588 590-594 596-616 618-632 856-862 868-872 884-890 896-900 914-918 924-928 942-946 952-958 970-974 980-986 998-1002 1008-1014 1026-1030 1036-1042 1054-1076 1194-1204 1208-1214 1216-1242 1244-1264 1266-1270 1272-1292 1294-1304 1314-1318 1322-1326 1328-1348 1350-1354 1356-1376 1378-1404 1406-1430 1434-1460 1462-1468 1470-1488 1490-1496 1498-1516 ' + ticks, 14);
    mini(l, 5, 2, '#c8fa4e', '69-2519');
    trace(69, 2519, '#f0e04a', 15);
    mini(l, 8, 2, sky, '868-876 878-884 900-912 926-940 958-968 982-998 1014-1026 1038-1054 1070-1082 1532-1540 1546-1564 1568-1596 1604-1620 1624-1646 1770-1778 1780-1786 1800-1808 1826-1834 1836-1842 1858-1862 1864-1870 1882-1888 1892-1898 1914-1926 1940-1954 1972-1982 1996-2012 2032-2040 2052-2068 2084-2096 2108-2116 2118-2124 2140-2144 2146-2152 2164-2172 2174-2180 2196-2200 2202-2208', 16);
    mini(l, 11, 2, '#9ba0ff', '854-1082 1758-2208');
    mini(l, 14, 2, '#f5a943', '632-660 744-772 800-828 856-1082 1532-1560 1646-1674 1702-1730 1758-2208', 17);
    mini(l, 17, 2, '#b080c8', [282, 394, 506, 620, 958, 1070, 1182, 1296, 1408, 1634, 1858, 1972, 2084, 2196].map(x => `${x}-${x + 2} ${x + 5}-${x + 7} ${x + 10}-${x + 12}`).join(' '));
    mini(l, 20, 2, sky, '868-878 980-990 1012-1026 1040-1054 1768-1780 1882-1892 1912-1928 1942-1956 1994-2004 2054-2068 2106-2118 2138-2152 2166-2180');
    each('184-632 828-830 860-1513 1678-1730 1762-2208', (a, b) => {
      const m = span(el('div', 'mini dots', l), a, b);
      m.style.top = '23px';
      m.style.height = '2px';
      for (let x = a; x < b; x += 7) trace(x, x + 4, sky, 18);
    });
    mini(l, 26, 2, sky, '410-420 526-532 948-956 1310-1322 1428-1434 1850-1856 1990-1998 2104-2110');
    mini(l, 29, 2, sky, '414-450 632-656 688-734 744-780 800-838 856-894 1314-1352 1532-1558 1588-1634 1646-1682 1702-1738 1758-1794', 19);
  },
  51(l) {
    const shared = '726-768 786-838 842-882 894-938 952-994 1010-1064 1290-1314 1318-1342 1346-1400 1402-1428 1430-1456 1570-1618 1626-1670 1686-1738 1744-1782 1796-1838 1854-1896';
    mini(l, 2, 8, 'var(--cyan)', '190-220 226-304 320-362 388-658 670-716 1458-1560 1912-1966 ' + shared, 20);
    mini(l, 2, 8, '#5fcabb', '1092-1200 1220-1282');
    mini(l, 2, 8, '#7afcb0', '612-618 1512-1520');
    mini(l, 12, 8, 'var(--lime)', '374-612 616-656 668-716 1280-1282 1458-1514 1518-1558 1912-1970 ' + shared, 21);
    mini(l, 22, 8, 'var(--leaf)', '152-180 636-660 692-712 748-772 860-884 918-938 942-958 974-998 1538-1560 1594-1614 1650-1674 1760-1786 1820-1838 1844-1846 1850-1860 1874-1898');
    each('152-180 636-660 692-712 748-772 860-884 918-938 974-998 1538-1560 1594-1614 1650-1674 1760-1786 1820-1838 1874-1898', (a, b) => trace(a, b, '#f0d84a', 22, 2));
  }
};

/* id, name, colour, row height, icon, colours of the enclosing groups */
const G = '#78fe5c';
const U = '#5d7fdd';
const TRACKS = [
  [1, '1 Group', G, 70, 'open', []],
  [2, '2 Group', G, 70, 'open', [G]],
  [3, '3 SOULSURPLU', '#ca72de', 34, 'right', [G, G]],
  [4, '4 Group', '#66c23a', 34, 'closed', [G, G]],
  [7, '7 10 Melodic Lo', '#588fe0', 104, 'down', [G, G], 'picked'],
  [8, '8 Group', '#fcf35f', 34, 'closed', [G, G]],
  [12, '12 SKY Keys', '#588fe0', 104, 'down', [G, G], 'picked'],
  [13, '13 SO_SCI_160', U, 70, 'down', [G, G]],
  [14, '14 MM_CC_gui', G, 34, 'right', [G, G]],
  [15, '15 LYRE_fx_voc', G, 34, 'right', [G, G]],
  [16, '16 Group', '#c49a40', 34, 'closed', [G, G]],
  [20, '20 Group', G, 34, 'closed', [G, G]],
  [25, '25 hug Epilogu', '#6ee6fe', 34, 'right', [G, G]],
  [26, '26 Group', '#7afcb0', 70, 'open', [G, G]],
  [27, '27 31-Audio 1', G, 34, 'right', [G, G, '#7afcb0']],
  [28, '28 Group', U, 70, 'open', [G, G]],
  [29, '29 One', U, 70, 'down', [G, G, U]],
  [30, '30 TSDF_bass', '#66c23a', 70, 'down', [G, G, U]],
  [31, '31 Group', U, 70, 'open', [G, G]],
  [32, '32 MOGL_808', U, 104, 'down', [G, G, U]],
  [33, '33 Piano_Bb_1', '#ae79c0', 34, 'right', [G, G]],
  [34, '34 Group', '#9ac4fa', 34, 'closed', [G]],
  [37, '37 Group', '#9ac4fa', 34, 'closed', [G]],
  [51, '51 Group', '#6ee6fe', 34, 'closed', []],
  [0, '', '', 18],
  [99, 'Main', '#b9dde8', 34, 'right', [], 'main']
];
const ICONS = {
  open: '<path d="M6 9h10M10 13.500h10M10 17.500h10"/>',
  closed: '<path d="M8 9h10M8 13h10M8 17h10"/>',
  right: '<path class="fill" d="M10 7L20 13L10 19Z"/>',
  down: '<path class="fill" d="M6.500 10H19.500L13 19Z"/>'
};

const $ = id => document.getElementById(id);
const lanes = $('lanes');
grid(lanes);
TRACKS.forEach(([id, name, color, height, icon, groups, state]) => {
  const size = height === 34 ? '' : ' h' + height;
  const lane = el('div', 'lane' + size + (state === 'main' ? ' main' : ''), lanes);
  if (state === 'picked') el('div', 'tint', lane);
  if (content[id]) content[id](lane);
  if (state === 'main') el('span', 'position', lane, '2/1');

  const header = el('div', 'header' + size, $('headers'));
  if (!name) {
    el('div', 'spare', header);
    el('div', 'mixer' + size, $('mixers'));
    return;
  }
  groups.forEach(g => { el('div', 'strip', header).style.background = g; });
  const title = el('div', 'title ' + (state || ''), header);
  title.style.background = color;
  const fold = el('button', 'fold', title);
  fold.setAttribute('aria-label', 'Unfold ' + name);
  fold.innerHTML = `<svg viewBox="0 0 26 26"><circle cx="13" cy="13" r="12"/>${ICONS[icon]}</svg>`;
  el('span', 'name', title, name);
  const mixer = el('div', 'mixer' + size + (state === 'main' ? ' main' : ''), $('mixers'));
  el('div', 'meter', mixer);
  el('div', 'meter', mixer);
});
[68, 2518].forEach(x => { el('div', 'edge', lanes).style.left = pct(x) + '%'; });

/* rulers */
for (let n = 11; n <= 101; n += 2) {
  const major = n % 4 === 1;
  const labelled = major && n < 101;
  const t = el('div', 'bar-tick' + (major ? '' : ' minor') + (labelled ? ' labelled' : ''), $('bar-ruler'));
  t.style.left = pct(bar(n)) + '%';
  if (labelled) el('span', '', t, String(n));
}
for (let i = -1; i <= 80; i++) {
  const t = el('div', 'time-tick' + (i % 5 ? '' : ' major'), $('time-ruler'));
  t.style.left = pct(46 + i * 31.720) + '%';
  if (i % 5 === 0) {
    const s = 20 + i * 2;
    el('span', '', t, Math.floor(s / 60) + ':' + String(s % 60).padStart(2, '0'));
  }
}
span($('loop'), 68, 2520);
grid($('locators'));
[['s', 68], ['e', 2518]].forEach(([label, x]) => {
  const m = el('div', 'locator', $('locators'));
  m.innerHTML = '<svg viewBox="0 0 18 20"><path d="M1 1L16 10L1 19Z"/></svg>';
  el('span', '', m, label);
  m.style.left = pct(x) + '%';
});

/* overview: the whole song, scaled to the window */
const OVER_START = 6;
const OVER_SPAN = 2844;
const toOver = x => 264 + (x - 69) * .765;
const rects = overviewRects.map(([a, b, c, y, h]) =>
  `<rect x="${toOver(a).toFixed(1)}" y="${y + 1}" width="${((b - a) * .765).toFixed(1)}" height="${h}" fill="${c}"/>`).join('');
$('overview').innerHTML =
  `<svg viewBox="${OVER_START} 0 ${OVER_SPAN} 24" preserveAspectRatio="none">${rects}<rect x="2418" y="3" width="98" height="1" fill="#a5fa7a"/><rect x="2524" y="3" width="36" height="1" fill="#a5fa7a"/><rect x="2568" y="3" width="34" height="1" fill="#a5fa7a"/><rect x="2612" y="3" width="30" height="1" fill="#a5fa7a"/><rect x="2656" y="3" width="20" height="1" fill="#a5fa7a"/></svg>`;
const over = x => (x - OVER_START) / OVER_SPAN * 100 + '%';
[264, 2138].forEach(x => { el('div', 'overview-edge', $('overview')).style.left = over(x); });
const view = el('div', 'overview-view', $('overview'));
view.style.left = over(214);
view.style.width = 1978 / OVER_SPAN * 100 + '%';
```
